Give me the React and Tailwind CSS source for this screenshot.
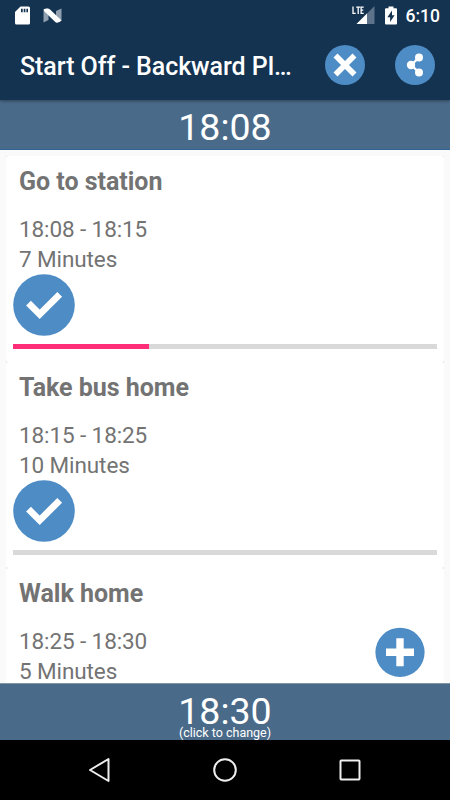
// App.jsx
import React from 'react';

const steps = [
  { title: 'Go to station', time: '18:08 - 18:15', duration: '7 Minutes', progress: 32, checked: true },
  { title: 'Take bus home', time: '18:15 - 18:25', duration: '10 Minutes', progress: 0, checked: true },
  { title: 'Walk home', time: '18:25 - 18:30', duration: '5 Minutes', progress: 0, checked: true },
];

const StatusBar = () => (
  <div className="flex h-[30px] items-center justify-between pl-[15px] pr-[10px]">
    <div className="flex items-center gap-[13px]">
      {/* SD card */}
      <svg width="15" height="19" viewBox="0 0 15 19">
        <path d="M5.5 .5H13.5Q15 .5 15 2V17Q15 18.5 13.5 18.5H1.5Q0 18.5 0 17V6Z" fill="#fff" />
        <path d="M6 2.7h1.7v3.6H6zM8.7 2.7h1.7v3.6H8.7zM11.4 2.7h1.6v3.6h-1.6z" fill="#143351" />
      </svg>
      {/* Android N */}
      <svg width="19" height="15" viewBox="0 0 19 15">
        <path d="M.5 1L5.5 .5V12L.5 14.5ZM13 3L18.5 .5V13L13 14.5Z" fill="#91a0b0" />
        <path d="M1 1.2Q4 -.2 6.5 1L18.3 12.3Q17 14.7 14 14.7L12.5 14.2L1 3Z" fill="#fff" />
      </svg>
    </div>
    <div className="flex items-center">
      <svg width="23" height="20" viewBox="0 0 23 20">
        <path d="M22.5 1V19H4.5Z" fill="#5d7389" />
        <path d="M15 8.5V19H4.5Z" fill="#fff" />
        <path d="M1 1.5V8.3H3.7M4.2 2.1H8.2M6.2 2.1V9M11.7 2.1H9.1V8.3H11.7M9.1 5.1H11.3" fill="none" stroke="#fff" strokeWidth="1.3" />
      </svg>
      <svg className="ml-[10px]" width="12" height="19" viewBox="0 0 12 19">
        <path d="M3.5 .5H8.5V2.3H11Q12 2.3 12 3.3V17.5Q12 18.5 11 18.5H1Q0 18.5 0 17.5V3.3Q0 2.3 1 2.3H3.5Z" fill="#fff" />
        <path d="M7 4.5L2.4 11.3H5.1V16L9.6 9.3H7Z" fill="#143351" />
      </svg>
      <span className="ml-[9px] mt-px text-[17.5px] font-medium leading-5">6:10</span>
    </div>
  </div>
);

const CheckIcon = () => (
  <svg className="block" width="62" height="62" viewBox="0 0 62 62">
    <circle cx="31" cy="31" r="30.8" fill="#4e8cc5" />
    <path d="M15.5 29.2L26.7 40.3L46.7 20.3" fill="none" stroke="#fff" strokeWidth="6.8" />
  </svg>
);

const StepCard = ({ step }) => (
  <div className="h-[206px] shrink-0 bg-[#dcdcdc]">
    <div className="h-full rounded-[2px] bg-white px-[7px] pt-[11px]">
      <div className="px-[6px] text-[22.5px] leading-[30px] tracking-[-0.1px] text-[#737373]">
        <h2 className="text-[25px] font-bold tracking-[-0.02px]">{step.title}</h2>
        <p className="mt-[17px]">{step.time}</p>
        <p>{step.duration}</p>
      </div>
      {step.checked && <CheckIcon />}
      <div className="mt-[8px] h-[5px] bg-[#d9d9d9]">
        <div className="h-full bg-[#ff2c78]" style={{ width: `${step.progress}%` }} />
      </div>
    </div>
  </div>
);

const App = () => {
  return (
    <div className="flex h-[800px] w-[450px] flex-col overflow-hidden bg-[#fafafa] font-['Roboto',sans-serif] text-white">
      {/* App bar */}
      <header className="relative z-10 h-[100px] shrink-0 bg-[#143351] shadow-[0_1px_3px_rgba(0,0,0,0.4)]">
        <StatusBar />
        <div className="flex h-[70px] items-center pl-5 pr-[15px]">
          <h1 className="w-[305px] pt-[3px] text-[25px] font-medium leading-[30px] tracking-[-0.06px]">Start Off - Backward Pl…</h1>
          <svg className="shrink-0" width="40" height="40" viewBox="0 0 40 40">
            <circle cx="20" cy="20" r="20" fill="#4e8cc5" />
            <path d="M10.5 10.5L29.5 29.5M29.5 10.5L10.5 29.5" stroke="#fff" strokeWidth="5.6" />
          </svg>
          <svg className="ml-[30px] shrink-0" width="40" height="40" viewBox="0 0 40 40">
            <circle cx="20" cy="20" r="20" fill="#4e8cc5" />
            <path d="M24 12.5L16.3 20L24 27.5" fill="none" stroke="#fff" strokeWidth="2.3" />
            <circle cx="24" cy="12.4" r="4" fill="#fff" />
            <circle cx="16" cy="20" r="4.2" fill="#fff" />
            <circle cx="24" cy="27.4" r="4" fill="#fff" />
          </svg>
        </div>
      </header>

      {/* Departure time */}
      <div className="h-[50px] shrink-0 border-b border-[#2f6494] bg-[#4a6a89] pt-[5px] text-center text-[37.5px] leading-[44px]">
        18:08
      </div>

      {/* Steps */}
      <div className="relative min-h-0 flex-1">
        <main className="flex h-full flex-col overflow-hidden px-[6px] pt-[6px]">
          {steps.map((step) => (
            <StepCard key={step.title} step={step} />
          ))}
        </main>
        <svg className="absolute bottom-[6px] right-[25px]" width="50" height="50" viewBox="0 0 50 50">
          <circle cx="25" cy="25.3" r="24.6" fill="#4e8cc5" />
          <path d="M25 11.3V39.3M11 25.3H39" stroke="#fff" strokeWidth="7.4" />
        </svg>
      </div>

      {/* Arrival time */}
      <div className="h-[57px] shrink-0 border-t border-[#8195a9] bg-[#4a6a89] pt-[10px] text-center">
        <div className="text-[37.5px] leading-[34px]">18:30</div>
        <div className="-mt-[3px] text-[12.5px] leading-[15px]">(click to change)</div>
      </div>

      {/* Navigation bar */}
      <nav className="flex h-[60px] shrink-0 items-center justify-center gap-[101px] bg-black">
        <svg width="24" height="26" viewBox="0 0 24 26" fill="none" stroke="#eee" strokeWidth="2">
          <path d="M20.5 2V24L2 13Z" strokeLinejoin="round" />
        </svg>
        <svg width="24" height="24" viewBox="0 0 24 24" fill="none" stroke="#eee" strokeWidth="2">
          <circle cx="12" cy="12" r="10.8" />
        </svg>
        <svg width="24" height="24" viewBox="0 0 24 24" fill="none" stroke="#eee" strokeWidth="2">
          <rect x="2.5" y="2.5" width="19" height="19" rx=".7" />
        </svg>
      </nav>
    </div>
  );
};

export default App;
